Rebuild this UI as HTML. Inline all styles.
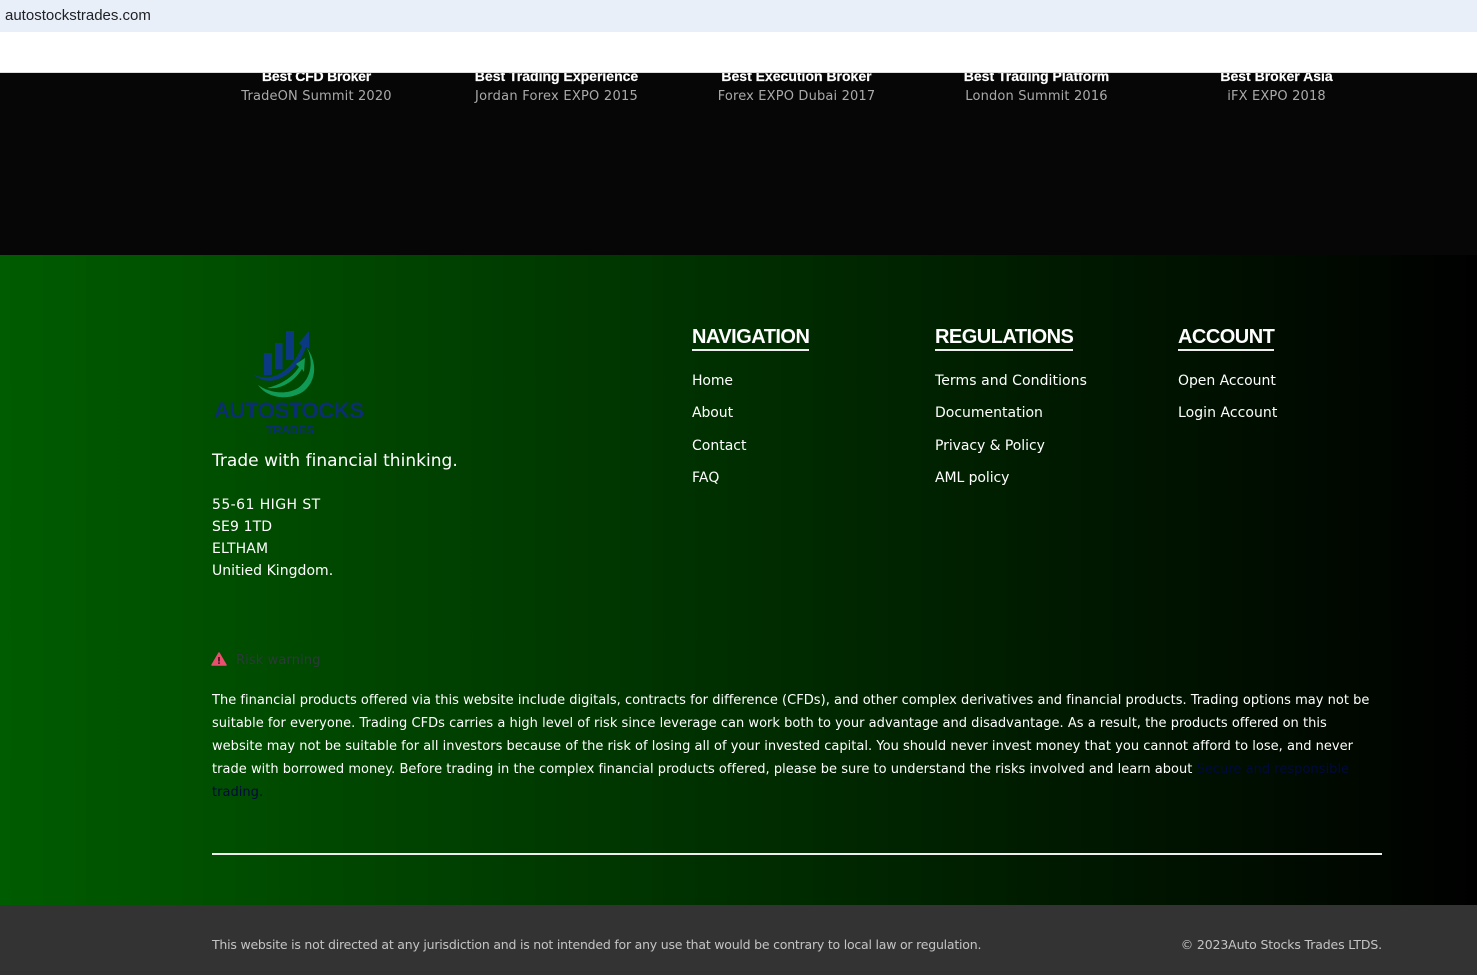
<!DOCTYPE html>
<html><head><meta charset="utf-8"><style>
html,body{margin:0;padding:0;width:1477px;height:975px;overflow:hidden;background:#060606}
body{position:relative;font-family:"DejaVu Sans","Liberation Sans",sans-serif;color:#fff}
.t{position:absolute;white-space:nowrap;line-height:20px}
.c{transform:translateX(-50%);text-align:center}
.b{font-family:"Liberation Sans",sans-serif;font-weight:bold;font-size:14px;color:#fff;-webkit-text-stroke:.2px #fff}
.s{font-size:13px;color:#aaa;letter-spacing:.16px}
.h{font-family:"Liberation Sans",sans-serif;font-weight:bold;font-size:20px;line-height:23px;border-bottom:2px solid #eee;letter-spacing:-.52px}
.l{font-size:14px}
.p{font-size:13px;letter-spacing:.025px}
.f{font-size:12.5px;color:#c4c4c4;letter-spacing:-.215px}
</style></head><body>
<div style="position:absolute;left:0;top:73px;width:1477px;height:182px;background:#060606"></div>
<div class="t b c" style="left:316.5px;top:66px;letter-spacing:-.2px">Best CFD Broker</div>
<div class="t b c" style="left:556.5px;top:66px">Best Trading Experience</div>
<div class="t b c" style="left:796.5px;top:66px">Best Execution Broker</div>
<div class="t b c" style="left:1036.5px;top:66px">Best Trading Platform</div>
<div class="t b c" style="left:1276.5px;top:66px">Best Broker Asia</div>
<div class="t s c" style="left:316.5px;top:87px">TradeON Summit 2020</div>
<div class="t s c" style="left:556.5px;top:87px;letter-spacing:.25px">Jordan Forex EXPO 2015</div>
<div class="t s c" style="left:796.5px;top:87px">Forex EXPO Dubai 2017</div>
<div class="t s c" style="left:1036.5px;top:87px">London Summit 2016</div>
<div class="t s c" style="left:1276.5px;top:87px">iFX EXPO 2018</div>

<div style="position:absolute;left:0;top:0;width:1477px;height:32px;background:#e9eff9"></div>
<div class="t" style="left:5px;top:6px;font-family:'Liberation Sans',sans-serif;font-size:15px;color:#202124">autostockstrades.com</div>
<div style="position:absolute;left:0;top:32px;width:1477px;height:41px;background:#fff;border-bottom:1px solid #ddd;box-sizing:border-box"></div>

<div style="position:absolute;left:0;top:255px;width:1477px;height:650px;background:linear-gradient(to right,#005c00,#000)"></div>
<div style="position:absolute;left:0;top:905px;width:1477px;height:70px;background:#333"></div>

<svg style="position:absolute;left:212px;top:325px" width="156" height="112" viewBox="212 325 156 112">
<rect x="264" y="353" width="8" height="22" fill="#0b3a82"/>
<rect x="275" y="343" width="7.500" height="26" fill="#0b3a82"/>
<rect x="286" y="331" width="8" height="29" fill="#0b3a82"/>
<path d="M253 374C270 384 292 372 302 346L299 343L309 331L309.500 349L306 347C296 376 270 390 253 374Z" fill="#0b3a82"/>
<path d="M307 348C317 362 317 380 304 391C290 401 268 399 258 385C268 392 285 396 298 388C311 379 314 362 307 348Z" fill="#109a55"/>
<path d="M267 388C280 385 292 378 299 367L296 364L305 358L304 372L302 369C294 382 280 390 267 388Z" fill="#109a55"/>
<text x="289" y="418" text-anchor="middle" font-family="Liberation Sans,sans-serif" font-weight="bold" font-size="22" fill="#0b2f70" textLength="150">AUTOSTOCKS</text>
<text x="290" y="434" text-anchor="middle" font-family="Liberation Sans,sans-serif" font-weight="bold" font-size="12" fill="#0b2f70" textLength="48">TRADES</text>
</svg>

<div class="t" style="left:212px;top:451px;font-size:17px;letter-spacing:.02px">Trade with financial thinking.</div>
<div class="t l" style="left:212px;top:495px;letter-spacing:.43px">55-61 HIGH ST</div>
<div class="t l" style="left:212px;top:517px;letter-spacing:.12px">SE9 1TD</div>
<div class="t l" style="left:212px;top:539px;letter-spacing:.12px">ELTHAM</div>
<div class="t l" style="left:212px;top:561px;letter-spacing:.03px">Unitied Kingdom.</div>

<div class="t h" style="left:692px;top:326px">NAVIGATION</div>
<div class="t h" style="left:935px;top:326px">REGULATIONS</div>
<div class="t h" style="left:1178px;top:326px">ACCOUNT</div>

<div class="t l" style="left:692px;top:371px;letter-spacing:-.1px">Home</div>
<div class="t l" style="left:692px;top:403px;letter-spacing:-.08px">About</div>
<div class="t l" style="left:692px;top:436px">Contact</div>
<div class="t l" style="left:692px;top:468px;letter-spacing:.12px">FAQ</div>
<div class="t l" style="left:935px;top:371px;letter-spacing:.07px">Terms and Conditions</div>
<div class="t l" style="left:935px;top:403px">Documentation</div>
<div class="t l" style="left:935px;top:436px;letter-spacing:-.06px">Privacy &amp; Policy</div>
<div class="t l" style="left:935px;top:468px;letter-spacing:-.08px">AML policy</div>
<div class="t l" style="left:1178px;top:371px;letter-spacing:-.05px">Open Account</div>
<div class="t l" style="left:1178px;top:403px;letter-spacing:.05px">Login Account</div>

<svg style="position:absolute;left:211px;top:652px" width="16" height="14" viewBox="0 0 16 14"><path d="M8 1L15 13H1Z" fill="#e8506e" stroke="#e8506e" stroke-width="1.500" stroke-linejoin="round"/><rect x="7.200" y="5" width="1.600" height="4.500" fill="#3a1020"/><rect x="7.200" y="10.300" width="1.600" height="1.600" fill="#3a1020"/></svg>
<div class="t" style="left:236px;top:651px;font-size:13px;color:#2b3a3a;letter-spacing:.12px">Risk warning</div>

<div class="t p" style="left:212px;top:691px">The financial products offered via this website include digitals, contracts for difference (CFDs), and other complex derivatives and financial products. Trading options may not be</div>
<div class="t p" style="left:212px;top:714px">suitable for everyone. Trading CFDs carries a high level of risk since leverage can work both to your advantage and disadvantage. As a result, the products offered on this</div>
<div class="t p" style="left:212px;top:737px">website may not be suitable for all investors because of the risk of losing all of your invested capital. You should never invest money that you cannot afford to lose, and never</div>
<div class="t p" style="left:212px;top:760px">trade with borrowed money. Before trading in the complex financial products offered, please be sure to understand the risks involved and learn about <span style="color:#000a3c">Secure and responsible</span></div>
<div class="t p" style="left:212px;top:783px;color:#000a3c">trading.</div>

<div style="position:absolute;left:212px;top:853px;width:1170px;height:2px;background:#eee"></div>

<div class="t f" style="left:212px;top:935px">This website is not directed at any jurisdiction and is not intended for any use that would be contrary to local law or regulation.</div>
<div class="t f" style="right:95px;top:935px;letter-spacing:-.14px">© 2023Auto Stocks Trades LTDS.</div>
</body></html>
